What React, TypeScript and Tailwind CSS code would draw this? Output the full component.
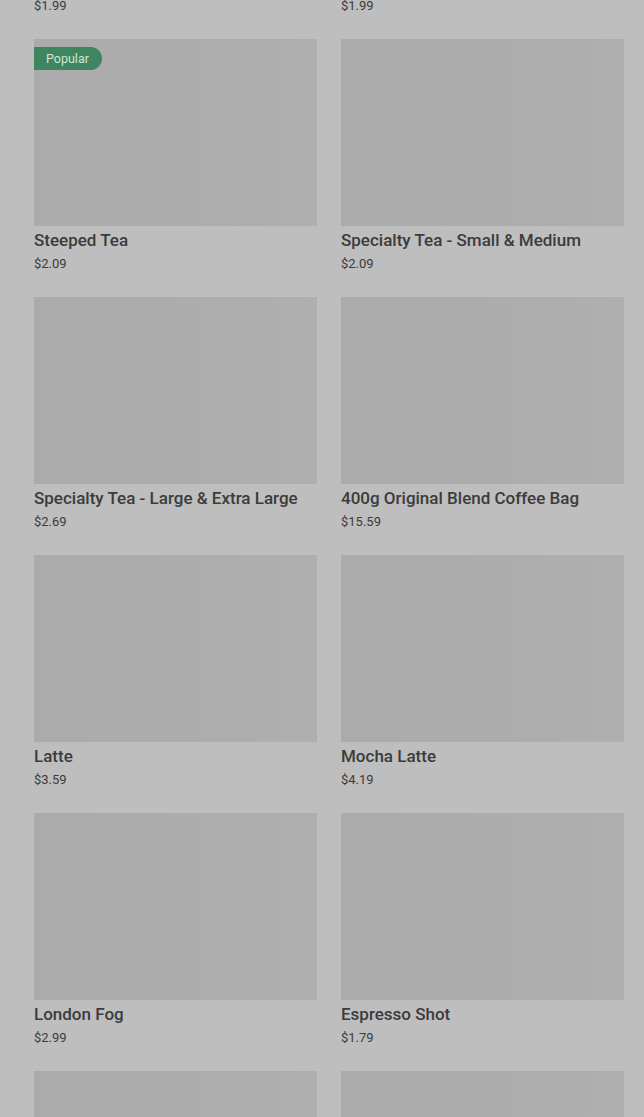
const items = [
  { name: "Hidden", price: "$1.99" },
  { name: "Hidden", price: "$1.99" },
  { name: "Steeped Tea", price: "$2.09", popular: true },
  { name: "Specialty Tea - Small & Medium", price: "$2.09" },
  { name: "Specialty Tea - Large & Extra Large", price: "$2.69" },
  { name: "400g Original Blend Coffee Bag", price: "$15.59" },
  { name: "Latte", price: "$3.59" },
  { name: "Mocha Latte", price: "$4.19" },
  { name: "London Fog", price: "$2.99" },
  { name: "Espresso Shot", price: "$1.79" },
  { name: "Americano", price: "$2.49" },
  { name: "Cappuccino", price: "$3.59" },
];

function ProductCard({ name, price, popular }: { name: string; price: string; popular?: boolean }) {
  return (
    <div className="flex flex-col">
      <div className="relative h-[187px] bg-gradient-to-r from-[#ababab] via-[#acacac] to-[#afafaf]">
        {popular && (
          <span className="absolute left-0 top-[8px] h-[23px] rounded-r-full bg-[#3f8660] pl-[12px] pr-[13px] text-[12.5px] leading-[23px] text-[#cfe6d6]">
            Popular
          </span>
        )}
      </div>
      <p className="mt-[3px] text-[17px] leading-[22px] font-medium text-[#3b3b3b] whitespace-nowrap">{name}</p>
      <p className="mt-[4px] text-[13px] leading-[18px] text-[#3b3b3b]">{price}</p>
    </div>
  );
}

export default function App() {
  return (
    <div className="h-[1117px] overflow-hidden bg-[#bebebe] font-['Roboto',sans-serif]">
      <div className="mt-[-219px] grid grid-cols-2 gap-x-[24px] gap-y-[24px] pl-[34px] pr-[20px]">
        {items.map((item, i) => (
          <ProductCard key={i} {...item} />
        ))}
      </div>
    </div>
  );
}
